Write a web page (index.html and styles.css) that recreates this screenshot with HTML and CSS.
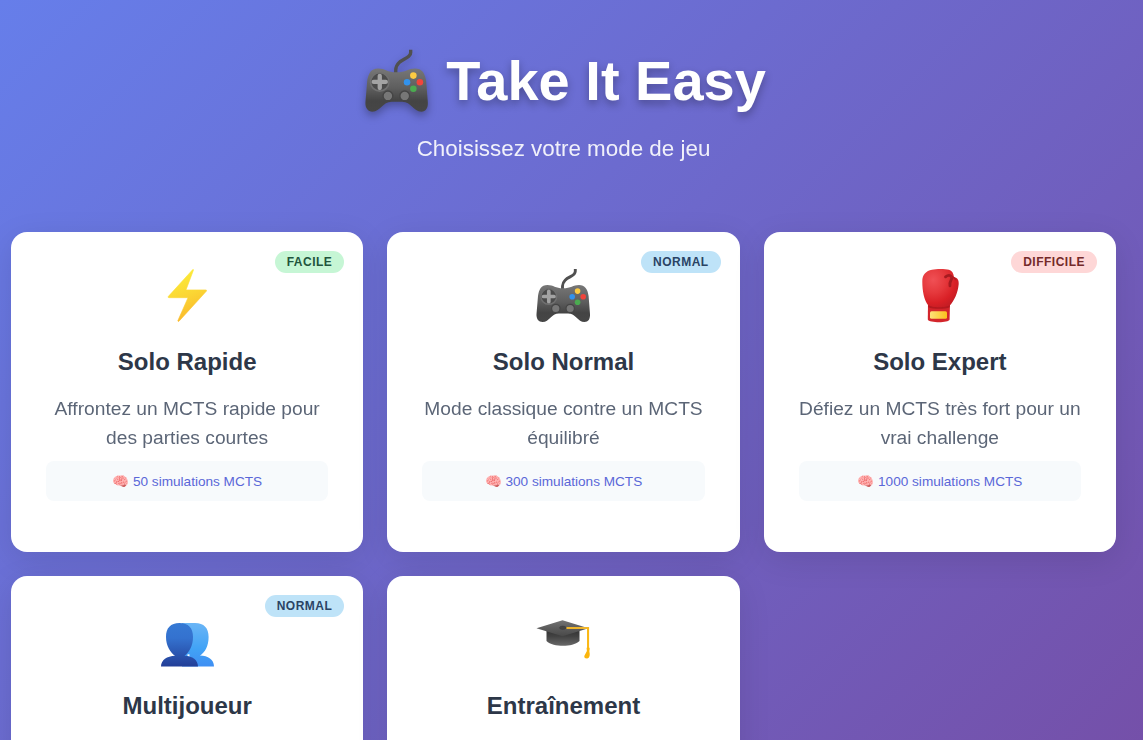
FILE: index.html
```html
<!DOCTYPE html>
<html lang="fr">
<head>
<meta charset="utf-8">
<title>Take It Easy</title>
<link rel="stylesheet" href="styles.css">
</head>
<body>
<svg class="defs" aria-hidden="true">
  <defs>
    <linearGradient id="padBody" x1="0" y1="0" x2="0" y2="1">
      <stop offset="0" stop-color="#777"/>
      <stop offset=".45" stop-color="#5e5e5e"/>
      <stop offset=".75" stop-color="#444"/>
      <stop offset="1" stop-color="#464646"/>
    </linearGradient>
    <linearGradient id="boltFill" x1=".3" y1="0" x2=".6" y2="1">
      <stop offset="0" stop-color="#fcee38"/>
      <stop offset=".5" stop-color="#fbd634"/>
      <stop offset="1" stop-color="#fab52a"/>
    </linearGradient>
    <radialGradient id="gloveFill" cx=".3" cy=".28" r=".75">
      <stop offset="0" stop-color="#f05055"/>
      <stop offset=".45" stop-color="#e5383c"/>
      <stop offset=".8" stop-color="#d92026"/>
      <stop offset="1" stop-color="#c71d24"/>
    </radialGradient>
    <linearGradient id="cuffFill" x1="0" y1="0" x2="1" y2="0">
      <stop offset="0" stop-color="#fde07a"/>
      <stop offset="1" stop-color="#fbc21c"/>
    </linearGradient>
    <linearGradient id="frontUser" gradientUnits="userSpaceOnUse" x1="0" y1="15" x2="0" y2="58">
      <stop offset="0" stop-color="#3679d4"/>
      <stop offset=".35" stop-color="#3472cf"/>
      <stop offset="1" stop-color="#233f98"/>
    </linearGradient>
    <linearGradient id="backUser" gradientUnits="userSpaceOnUse" x1="0" y1="15" x2="0" y2="58">
      <stop offset="0" stop-color="#6ab5f6"/>
      <stop offset=".6" stop-color="#41a3f6"/>
      <stop offset="1" stop-color="#3f8ff3"/>
    </linearGradient>
    <linearGradient id="capBase" x1="0" y1="0" x2="0" y2="1">
      <stop offset="0" stop-color="#333"/>
      <stop offset=".4" stop-color="#424242"/>
      <stop offset="1" stop-color="#696969"/>
    </linearGradient>
    <linearGradient id="capTop" x1="0" y1="0" x2="0" y2="1">
      <stop offset="0" stop-color="#737373"/>
      <stop offset=".5" stop-color="#5c5c5c"/>
      <stop offset="1" stop-color="#494949"/>
    </linearGradient>
    <symbol id="gamepad" viewBox="0 0 64 64">
      <path d="M44.3 5v2.2c0 6.500-12.200 5-12.800 15V26" fill="none" stroke="#505050" stroke-width="2.900"/>
      <path d="M16.500 21C10 21 8 25.500 7 32L5.500 50c-.3 5 2.200 8 6 8 7 0 8.500-8.500 16.500-8.500h9c8 0 9.500 8.500 16.500 8.500 3.800 0 5.800-3 5.500-8l-1.400-18c-1-7-3.600-11-9.600-11-6 0-8 3.300-16 3.300-7.500 0-9.500-3.300-15.500-3.300z" fill="url(#padBody)"/>
      <circle cx="17.800" cy="32.500" r="7.900" fill="#4b4b4b" stroke="#707070" stroke-width="1.400"/>
      <path d="M17.800 27.300v10.400M12.600 32.500H23" stroke="#a3a3a3" stroke-width="3.700" stroke-linecap="round"/>
      <circle cx="24.800" cy="44.500" r="4.200" fill="#777" stroke="#454545" stroke-width="1.200"/>
      <circle cx="39.200" cy="44.500" r="4.200" fill="#777" stroke="#454545" stroke-width="1.200"/>
      <circle cx="46.600" cy="27.100" r="2.800" fill="#fccb42"/>
      <circle cx="41.200" cy="32.700" r="2.800" fill="#3292ec"/>
      <circle cx="52.200" cy="32.700" r="2.800" fill="#f1453b"/>
      <circle cx="46.600" cy="38.300" r="2.800" fill="#4bab50"/>
    </symbol>
  </defs>
</svg>
<div class="page">
  <header class="header">
    <h1 class="title"><svg class="title-icon"><use href="#gamepad"/></svg>Take It Easy</h1>
    <p class="subtitle">Choisissez votre mode de jeu</p>
  </header>
  <main class="modes">
    <article class="card">
      <span class="badge easy">Facile</span>
      <svg class="icon" viewBox="0 0 64 64">
        <path d="M37.800 5.500 13.200 32.600q-.5 1 .7 1.100H33L22.800 56.800q.2 1 1.200.4L51.500 27q.4-1-.7-1.100H31L38.500 6q0-.8-.7-.5z" fill="url(#boltFill)" stroke="url(#boltFill)" stroke-width=".6" stroke-linejoin="round"/>
      </svg>
      <h3 class="name">Solo Rapide</h3>
      <p class="text">Affrontez un MCTS rapide pour des parties courtes</p>
      <div class="sims">🧠 50 simulations MCTS</div>
    </article>
    <article class="card">
      <span class="badge normal">Normal</span>
      <svg class="icon"><use href="#gamepad"/></svg>
      <h3 class="name">Solo Normal</h3>
      <p class="text">Mode classique contre un MCTS équilibré</p>
      <div class="sims">🧠 300 simulations MCTS</div>
    </article>
    <article class="card">
      <span class="badge hard">Difficile</span>
      <svg class="icon" viewBox="0 0 64 64">
        <path d="M20 39h22l-.4 16.500C41 57.500 36 58.200 31 58.200s-10.700-.7-11.200-2.700z" fill="#d3252b"/>
        <path d="M24 5.800c4-1 13-1 17 0 3 .8 4.500 3.500 5 7.500 3 .2 5 2.200 4.700 6.700C50 29 46 37 41.800 41.500c-3 3-18.500 3-21.500 0C16 36 14.300 27 14.300 17.500 14.300 10.500 18 7 24 5.800z" fill="url(#gloveFill)"/>
        <path d="M20.300 41c3 3 18.500 3 21.500 0v2.300c-4 2-17.500 2-21.500 0z" fill="#b3191f"/>
        <rect x="22" y="47.300" width="17" height="7.500" rx="1.500" fill="url(#cuffFill)"/>
        <path d="M37.500 12.800c4-3 8-.5 5.500 3.500-1 1.800-1.500 3.500-1 5.500" fill="none" stroke="#a61b20" stroke-width="2.800" stroke-linecap="round"/>
        <path d="M43.500 13q3 0 4 2.500" fill="none" stroke="#b31c21" stroke-width="1.600" stroke-linecap="round"/>
      </svg>
      <h3 class="name">Solo Expert</h3>
      <p class="text">Défiez un MCTS très fort pour un vrai challenge</p>
      <div class="sims">🧠 1000 simulations MCTS</div>
    </article>
    <article class="card">
      <span class="badge normal">Normal</span>
      <svg class="icon" viewBox="0 0 64 64">
        <path d="M40 15c9 0 13.600 5 13.600 14 0 9-3.600 15.500-8.600 18.500 8 .2 14 4 14 11H27V15z" fill="url(#backUser)"/>
        <path d="M32.500 46.300h2v2.200h-2z" fill="#fff"/>
        <path d="M24.500 15C15.500 15 11 20 11 29c0 9 4.500 15.700 9 18.700C12 48 6 52 6 58.500h37c0-6.500-5.500-10.500-13.500-10.800C34 44.700 38 38 38 29c0-9-4.500-14-13.500-14z" fill="url(#frontUser)"/>
      </svg>
      <h3 class="name">Multijoueur</h3>
    </article>
    <article class="card">
      <svg class="icon" viewBox="0 0 64 64">
        <path d="M15.500 22h33v11c-4 3.500-10 4.800-16.500 4.800S19 36.500 15.500 33z" fill="url(#capBase)"/>
        <path d="M5.500 20.300 31.500 12.300 57.500 20.300 31.500 28.300z" fill="url(#capTop)"/>
        <ellipse cx="31.800" cy="19.800" rx="3.200" ry="1.700" fill="#444" stroke="#3a3a3a" stroke-width=".5"/>
        <path d="M35.500 20H57.100v21" fill="none" stroke="#efb52b" stroke-width="2"/>
        <path d="M57.100 20v20" stroke="#fcb813" stroke-width="1.800"/>
        <path d="M55.600 39.800h3v2l-.3 1.200q1.500 6.500-2 7.500-3.200.2-3-2.500l2.600-5z" fill="#fbb50c"/>
      </svg>
      <h3 class="name">Entraînement</h3>
    </article>
  </main>
</div>
</body>
</html>
```
FILE: styles.css
```css
* { box-sizing: border-box; margin: 0; padding: 0; }
html { height: 100%; overflow: hidden; }
body {
  height: 740px;
  overflow: hidden;
  font-family: "Liberation Sans", Arial, sans-serif;
  background: linear-gradient(135deg, #667eea 0%, #764ba2 100%) 0 0 / 100% 944px no-repeat;
}
.defs { position: absolute; width: 0; height: 0; }
.page { padding: 49px 27px 0 11px; }
.header { text-align: center; height: 183px; color: #fff; }
.title {
  display: flex;
  justify-content: center;
  align-items: center;
  gap: 13px;
  height: 64px;
  font-size: 56px;
  line-height: 64px;
  font-weight: 700;
  text-shadow: 0 4px 8px rgba(0, 0, 0, 0.3);
}
.title-icon {
  flex: none;
  width: 74.67px;
  height: 74.67px;
  margin-left: -2.5px;
  filter: drop-shadow(0 4px 4px rgba(0, 0, 0, 0.3));
}
.subtitle { margin-top: 23px; font-size: 22.4px; line-height: 26px; opacity: 0.9; }
.modes { display: grid; grid-template-columns: repeat(3, 1fr); grid-auto-rows: 320px; gap: 24px; }
.card {
  position: relative;
  padding: 32px 35px;
  text-align: center;
  background: #fff;
  border-radius: 16px;
  box-shadow: 0 8px 32px rgba(0, 0, 0, 0.1);
}
.badge {
  position: absolute;
  top: 19px;
  right: 19px;
  padding: 4px 12px;
  border-radius: 20px;
  font-size: 12px;
  line-height: 14px;
  font-weight: 700;
  letter-spacing: 0.5px;
  text-transform: uppercase;
}
.easy { background: #c6f6d5; color: #22543d; }
.normal { background: #bee3f8; color: #2a4365; }
.hard { background: #fed7d7; color: #742a2a; }
.icon { display: block; width: 64px; height: 64px; margin: 0 auto; }
.name { margin-top: 20px; font-size: 24px; line-height: 28px; color: #2d3748; }
.text { margin-top: 19px; font-size: 19.2px; line-height: 28.8px; color: #4a5568; opacity: 0.9; }
.sims {
  height: 40px;
  margin-top: 8px;
  border-radius: 8px;
  background: #f7fafc;
  color: #5a67d8;
  font-size: 13.6px;
  line-height: 42px;
}
```
